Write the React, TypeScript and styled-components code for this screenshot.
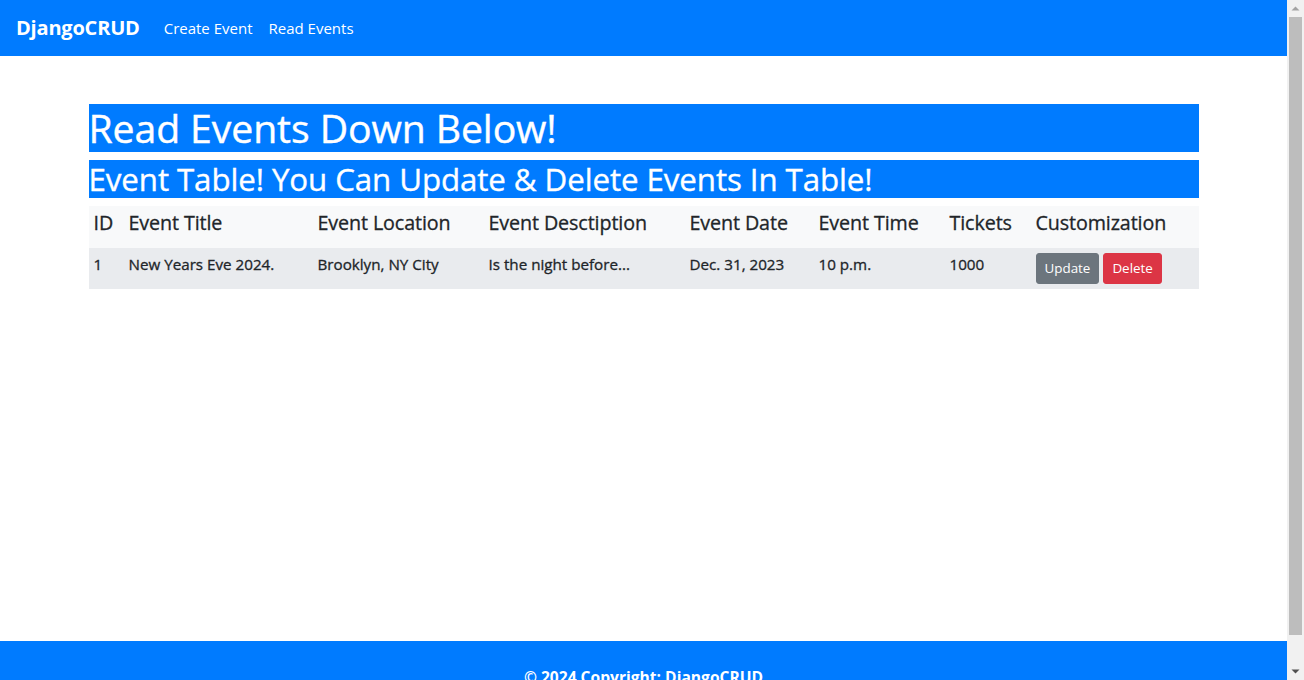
import React from "react";
import styled, { createGlobalStyle } from "styled-components";

const GlobalStyle = createGlobalStyle`
  body {
    margin: 0;
    font-family: "Open Sans", "Noto Sans", sans-serif;
    color: #212529;
    background: #ffffff;
  }
  * { box-sizing: border-box; }
`;

const Viewport = styled.div`
  display: flex;
  align-items: flex-start;
`;

const Page = styled.div`
  flex: 1;
  min-width: 0;
  display: flex;
  flex-direction: column;
`;

const ScrollRail = styled.div`
  position: sticky;
  top: 0;
  width: 17px;
  height: 100vh;
  flex: none;
  background: #f1f1f1;
  display: flex;
  flex-direction: column;
`;

const ScrollButton = styled.div`
  height: 17px;
  flex: none;
  display: flex;
`;

const ScrollTrack = styled.div`
  flex: 1;
  padding: 0 2px 28px;
  display: flex;
`;

const ScrollThumb = styled.div`
  flex: 1;
  background: #bdbdbd;
`;

const NavBar = styled.nav`
  height: 56px;
  background: #007bff;
  display: flex;
  align-items: center;
  padding: 0 16px;
`;

const Brand = styled.a`
  color: #ffffff;
  font-size: 20px;
  font-weight: 700;
  line-height: 30px;
  margin-right: 16px;
  text-decoration: none;
  letter-spacing: -0.2px;
`;

const NavLink = styled.a`
  color: #ffffff;
  font-size: 15px;
  line-height: 24px;
  padding: 0 8px;
  text-decoration: none;
`;

const Main = styled.main`
  min-height: 585px;
`;

const Container = styled.div`
  max-width: 1140px;
  margin: 0 auto;
  padding: 48px 15px 0;
`;

const Title = styled.h1`
  margin: 0 0 8px;
  background: #007bff;
  color: #ffffff;
  font-size: 39.2px;
  font-weight: 500;
  line-height: 48px;
  letter-spacing: -0.1px;
  -webkit-text-stroke: 0.4px currentColor;
`;

const SubTitle = styled.h2`
  margin: 0 0 8px;
  background: #007bff;
  color: #ffffff;
  font-size: 31.3px;
  font-weight: 500;
  line-height: 38px;
  letter-spacing: -0.1px;
  -webkit-text-stroke: 0.35px currentColor;
`;

const Table = styled.table`
  width: 100%;
  border-collapse: collapse;
  table-layout: fixed;
`;

const HeadRow = styled.tr`
  background: #f8f9fa;
  height: 42px;
`;

const BodyRow = styled.tr`
  background: #e9ebee;
  height: 41px;
`;

const Th = styled.th`
  text-align: left;
  padding: 5px;
  font-size: 19.7px;
  font-weight: 500;
  line-height: 24px;
  vertical-align: top;
  white-space: nowrap;
  letter-spacing: -0.1px;
  -webkit-text-stroke: 0.3px currentColor;
`;

const Td = styled.td`
  padding: 6px 5px 5px;
  font-size: 15.2px;
  font-weight: 500;
  line-height: 20px;
  vertical-align: top;
  white-space: nowrap;
  -webkit-text-stroke: 0.3px currentColor;
`;

const ButtonCell = styled.td`
  padding: 5px;
  vertical-align: top;
`;

const Buttons = styled.div`
  display: flex;
  gap: 4px;
`;

const Button = styled.button<{ $variant: "secondary" | "danger" }>`
  font-family: "Open Sans", "Noto Sans", sans-serif;
  font-size: 13.4px;
  line-height: 21px;
  padding: 4px 8px;
  border-radius: 3px;
  border: 1px solid ${(p) => (p.$variant === "danger" ? "#dc3545" : "#6c757d")};
  background: ${(p) => (p.$variant === "danger" ? "#dc3545" : "#6c757d")};
  color: #ffffff;
  cursor: pointer;
`;

const Footer = styled.footer`
  background: #007bff;
  color: #ffffff;
  text-align: center;
  padding: 24px;
  font-weight: 700;
  font-size: 15.6px;
  line-height: 24px;
`;

const columns = [35, 189, 171, 201, 129, 131, 86, 168];
const headers = [
  "ID",
  "Event Title",
  "Event Location",
  "Event Desctiption",
  "Event Date",
  "Event Time",
  "Tickets",
  "Customization",
];

export default function App() {
  return (
    <Viewport>
      <GlobalStyle />
      <Page>
        <NavBar>
          <Brand href="#">DjangoCRUD</Brand>
          <NavLink href="#">Create Event</NavLink>
          <NavLink href="#">Read Events</NavLink>
        </NavBar>
        <Main>
          <Container>
            <Title>Read Events Down Below!</Title>
            <SubTitle>Event Table! You Can Update &amp; Delete Events In Table!</SubTitle>
            <Table>
              <colgroup>
                {columns.map((w, i) => (
                  <col key={i} style={{ width: w }} />
                ))}
              </colgroup>
              <thead>
                <HeadRow>
                  {headers.map((h) => (
                    <Th key={h}>{h}</Th>
                  ))}
                </HeadRow>
              </thead>
              <tbody>
                <BodyRow>
                  <Td>1</Td>
                  <Td>New Years Eve 2024.</Td>
                  <Td>Brooklyn, NY City</Td>
                  <Td>Is the night before...</Td>
                  <Td>Dec. 31, 2023</Td>
                  <Td>10 p.m.</Td>
                  <Td>1000</Td>
                  <ButtonCell>
                    <Buttons>
                      <Button $variant="secondary">Update</Button>
                      <Button $variant="danger">Delete</Button>
                    </Buttons>
                  </ButtonCell>
                </BodyRow>
              </tbody>
            </Table>
          </Container>
        </Main>
        <Footer>© 2024 Copyright: DjangoCRUD</Footer>
      </Page>
      <ScrollRail aria-hidden="true">
        <ScrollButton>
          <svg width="17" height="17" viewBox="0 0 17 17">
            <polygon points="4.5,10.5 8.5,6.5 12.5,10.5" fill="#a3a3a3" />
          </svg>
        </ScrollButton>
        <ScrollTrack>
          <ScrollThumb />
        </ScrollTrack>
        <ScrollButton>
          <svg width="17" height="17" viewBox="0 0 17 17">
            <polygon points="4.5,6.5 12.5,6.5 8.5,10.5" fill="#505050" />
          </svg>
        </ScrollButton>
      </ScrollRail>
    </Viewport>
  );
}
